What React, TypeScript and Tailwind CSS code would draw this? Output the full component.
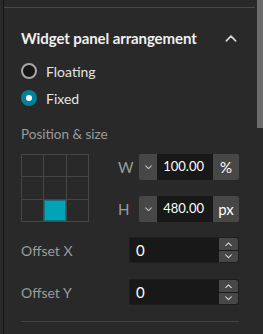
import React from "react";

const Chev = ({ up = false, size = 8, color = "#d0d0d0", sw = 1.3 }: { up?: boolean; size?: number; color?: string; sw?: number }) => (
  <svg width={size} height={size / 2 + 1} viewBox="0 0 10 6" fill="none">
    <polyline
      points={up ? "1,5 5,1 9,5" : "1,1 5,5 9,1"}
      stroke={color}
      strokeWidth={sw * 1.25}
      strokeLinecap="round"
      strokeLinejoin="round"
    />
  </svg>
);

function SizeRow({ label, value, unit }: { label: string; value: string; unit: string }) {
  return (
    <div className="flex items-center h-[26px]">
      <span className="w-[22px] pl-px text-[15px] text-[#9c9c9c] leading-none">{label}</span>
      <div className="flex h-[26px] rounded-[2px] overflow-hidden">
        <div className="w-[18px] bg-[#474747] flex items-center justify-center">
          <Chev size={7} color="#bdbdbd" />
        </div>
        <div className="w-[56px] bg-[#181818] flex items-center justify-end pr-[9px] text-[13px] text-white">{value}</div>
        <div className="w-[26px] bg-[#474747] flex items-center justify-center text-[15px] text-white">{unit}</div>
      </div>
    </div>
  );
}

function OffsetRow({ label }: { label: string }) {
  return (
    <div className="flex items-center h-[26px]">
      <span className="w-[108px] text-[14px] text-[#9c9c9c]">{label}</span>
      <div className="flex-1 flex h-[26px] bg-[#181818] rounded-[2px] border border-[#1f1f1f]">
        <div className="flex-1 flex items-center pl-[6px] text-[15px] text-white">0</div>
        <div className="w-[19px] flex flex-col gap-px">
          <div className="flex-1 bg-[#474747] rounded-tr-[2px] flex items-center justify-center">
            <Chev up size={7} color="#d0d0d0" />
          </div>
          <div className="flex-1 bg-[#474747] rounded-br-[2px] flex items-center justify-center">
            <Chev size={7} color="#d0d0d0" />
          </div>
        </div>
      </div>
    </div>
  );
}

export default function App() {
  return (
    <div
      className="w-[263px] h-[334px] bg-[#292929] flex overflow-hidden"
      style={{ fontFamily: 'Lato, "Noto Sans", sans-serif' }}
    >
      <div className="w-[3px]" />
      <div className="w-px bg-[#151515]" />
      <div className="flex-1 flex flex-col">
        <div className="h-[7px]" />
        <div className="h-px bg-[#4a4a4a] mr-[2px]" />
        <div className="pl-[17px] pr-[18px] flex flex-col">
          <div className="mt-[18px] h-6 flex items-center justify-between">
            <span className="text-[15px] font-bold text-[#f0f0f0] tracking-[-0.1px]">Widget panel arrangement</span>
            <span className="mr-[2px]">
              <Chev up size={12} color="#d8d8d8" sw={1.1} />
            </span>
          </div>
          <div className="mt-[11px] h-5 flex items-center">
            <span className="w-[16px] h-[16px] rounded-full border-2 border-[#a8a8a8] bg-[#161616] ml-[0px]" />
            <span className="ml-[9px] text-[14px] text-[#e4e4e4]">Floating</span>
          </div>
          <div className="mt-[7px] h-5 flex items-center">
            <span className="w-[16px] h-[16px] rounded-full bg-[#00829b] flex items-center justify-center">
              <span className="w-[6px] h-[6px] rounded-full bg-white" />
            </span>
            <span className="ml-[9px] text-[14px] text-[#e4e4e4]">Fixed</span>
          </div>
          <div className="mt-[17px] h-[18px] flex items-center text-[13.5px] text-[#9c9c9c]">Position &amp; size</div>
          <div className="mt-[11px] flex">
            <div className="w-[68px] h-[68px] grid grid-cols-3 grid-rows-3 gap-px p-px bg-[#464646]">
              <div className="bg-[#292929]" />
              <div className="bg-[#292929]" />
              <div className="bg-[#292929]" />
              <div className="bg-[#292929]" />
              <div className="bg-[#292929]" />
              <div className="bg-[#292929]" />
              <div className="bg-[#292929]" />
              <div className="bg-[#00a4b6] border border-[#1d6f7a]" />
              <div className="bg-[#292929]" />
            </div>
            <div className="ml-[28px] flex flex-col gap-4">
              <SizeRow label="W" value="100.00" unit="%" />
              <SizeRow label="H" value="480.00" unit="px" />
            </div>
          </div>
          <div className="mt-[15px]">
            <OffsetRow label="Offset X" />
          </div>
          <div className="mt-[16px]">
            <OffsetRow label="Offset Y" />
          </div>
          <div className="mt-[16px] h-px bg-[#444444]" />
        </div>
      </div>
      <div className="w-[6px] flex flex-col">
        <div className="h-[128px] bg-[#6b6b6b]" />
      </div>
    </div>
  );
}
